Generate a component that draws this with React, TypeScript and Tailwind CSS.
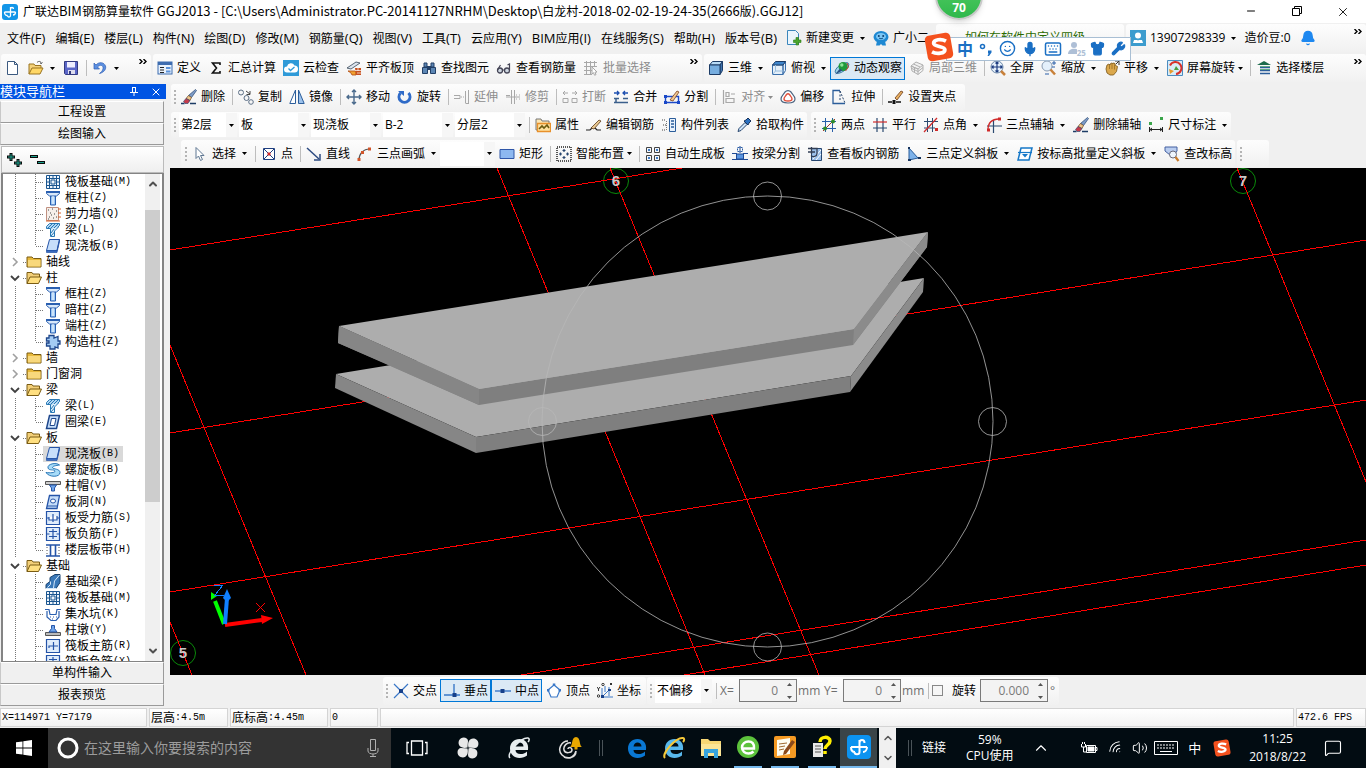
import React from 'react';
import { Bell, Minus, X, Smile, Mic, Keyboard, Shirt, Wrench, ChevronUp, ChevronDown, Wifi, Volume2, MessageSquare } from 'lucide-react';

const B = '#2a5fa8';
const N = '#26456e';
const G = '#a8a8a8';

// 16x16 toolbar drawings
const icons: Record<string, React.ReactNode> = {
  logo: (
    <>
      <rect width="16" height="16" rx="3" fill="#1396e8" />
      <path d="M2.500 8h11M8.500 3v8.500c0 2-3 2-3 0M8.500 5c0-2 3-2 3 0M2.500 8c0 2 1 3.500 3 3.500M13.500 8c0 2-1 3-2.500 3" fill="none" stroke="#fff" strokeWidth="1.300" />
    </>
  ),
  newDoc: <path d="M2.500 1.500h7l3 3v10h-10zM9.500 1.500v3h3" fill="#fff" stroke="#3c5a80" />,
  open: (
    <>
      <path d="M1 14V4h5l1 1.500h6V8" fill="#f5d27a" stroke="#9a7420" />
      <path d="M1 14l3-6h11l-3 6z" fill="#ffd766" stroke="#9a7420" />
      <path d="M9 2.500c2-2 4-1 4.500 1l1-1M13.500 3.500l-1.500-.5" fill="none" stroke="#555" />
    </>
  ),
  save: (
    <>
      <path d="M1.500 1.500h13v13h-12l-1-1z" fill="#5a66c8" stroke="#333a80" />
      <path d="M4 2h8v5.500H4z" fill="#eef" />
      <path d="M5 10h7v4H5z" fill="#dde" />
      <path d="M6 11h2v3H6z" fill="#333a80" />
    </>
  ),
  undo: <path d="M2 3v6h5.500L5.500 7c3-3 6-1.500 5.500 1.500-.2 2-1.500 3.500-3.500 5C12 12.500 14.500 9 13.500 6 12 2 7 1.500 4 5z" fill="#5b8fe0" stroke="#2c5db5" strokeWidth=".7" />,
  define: (
    <>
      <rect x="1" y="2" width="14" height="12" fill="#e8f1fc" stroke="#3d6cb0" />
      <path d="M1 2h14v3H1z" fill="#3d6cb0" />
      <path d="M3 7.500h4M3 10h4M3 12.500h4" stroke="#222" />
      <path d="M9 7h4.500v2H9zM9 10.500h4.500v2H9z" fill="#5a92da" />
    </>
  ),
  sum: <path d="M12 5V3H4.500l4 5-4 5H12v-2" fill="none" stroke="#111" strokeWidth="1.600" />,
  cloud: (
    <>
      <path d="M0 0h16v16H0z" fill="#2f9ad8" />
      <path d="M4 12.500a3 3 0 0 1 0-6 4 4 0 0 1 7.500-1 3.500 3.500 0 0 1 0 7z" fill="#fff" />
      <path d="M5.500 8.500l2 2 4-3.500" fill="none" stroke="#2f9ad8" strokeWidth="1.300" />
    </>
  ),
  level: (
    <>
      <path d="M1 8l9-6 4 1-9 6z" fill="#dde5ee" stroke="#345" strokeWidth=".8" />
      <path d="M2 11h8v4H6l-1-2z" fill="#f0a030" stroke="#b04a10" strokeWidth=".8" />
      <path d="M9 8h6v7h-5z" fill="#c8501e" />
      <path d="M9 10.500h6M12 8v3M11 13h4" stroke="#fff" strokeWidth=".7" />
    </>
  ),
  find: (
    <>
      <path d="M3 3h3v4H3zM10 3h3v4h-3zM1.500 7.500h5v6h-5zM9.500 7.500h5v6h-5z" fill="#5c86b4" stroke="#223f66" />
      <path d="M6 6h4v4H6z" fill="#223f66" />
    </>
  ),
  lens: (
    <>
      <circle cx="4" cy="10.500" r="2.500" fill="#cfd8e2" stroke="#445" strokeWidth="1.300" />
      <circle cx="11" cy="10.500" r="2.500" fill="#cfd8e2" stroke="#445" strokeWidth="1.300" />
      <path d="M6.500 10h2M1.500 10l3-5M13.500 10V4l-2 1" fill="none" stroke="#445" strokeWidth="1.200" />
    </>
  ),
  batch: (
    <>
      <path d="M1 2.500h13M1 6.500h13M1 10.500h8M1 14.500h8M3.500 1v14M7.500 1v14M11.500 1v6" stroke={G} />
      <path d="M9 7l5 5-2 .2 1 2.500-1.500.5-1-2.500L9 14z" fill="#fff" stroke={G} />
    </>
  ),
  cube: (
    <>
      <path d="M1.500 5l3-3.500h10L12 5z" fill="#b9dcf7" stroke="#1d3c66" />
      <path d="M12 5l2.500-3.500v9L12 14.500z" fill="#3f74b0" stroke="#1d3c66" />
      <path d="M1.500 5H12v9.500H1.500z" fill="#77aee0" stroke="#1d3c66" />
    </>
  ),
  cubeTop: (
    <>
      <path d="M1.500 5H12v9.500H1.500zM12 5l2.500-3.500v9L12 14.500z" fill="#e4eff9" stroke="#3a6eaa" />
      <path d="M1.500 5l3-3.500h10L12 5z" fill="#3f86cc" stroke="#1d3c66" />
      <path d="M4.500 5v6h8M4.500 11l-3 3.500" fill="none" stroke="#9abede" />
    </>
  ),
  orbit: (
    <>
      <ellipse cx="8" cy="8" rx="8" ry="3.500" transform="rotate(-35 8 8)" fill="#9fd3ea" stroke="#2a6f9a" strokeWidth=".8" />
      <circle cx="9" cy="6.500" r="4.500" fill="#1f9a3c" />
      <circle cx="7.800" cy="5" r="1.700" fill="#8ee29a" />
      <path d="M1 14.500l5-6 2.500 2z" fill="#2a4d80" />
      <path d="M13 3l1.500 4-3 4" fill="none" stroke="#b8452a" />
    </>
  ),
  cubeGray: (
    <path d="M2 6l5-4 7 3-5 4zM2 6l1 5 6 3.500V9zM9 14.500l5-4V5M4.500 4l6.500 3M5.500 7.500v5M3 8.500l6 3 5-4" fill="#f1f1f1" stroke="#b0b0b0" />
  ),
  full: (
    <>
      <circle cx="7" cy="7" r="6" fill="#e4f0fb" stroke="#6b87a8" />
      <path d="M11 11l4 4" stroke="#c8813a" strokeWidth="2.500" />
      <path d="M7 2v10M2 7h10M5.500 3.500L7 2l1.500 1.500M5.500 10.500L7 12l1.500-1.500M3.500 5.500L2 7l1.500 1.500M10.500 5.500L12 7l-1.500 1.500" fill="none" stroke="#1d3c80" strokeWidth="1.200" />
    </>
  ),
  zoom: (
    <>
      <circle cx="6" cy="6" r="5" fill="#e4f0fb" stroke="#8a9cb2" />
      <path d="M9.500 9.500l4.500 5" stroke="#c8813a" strokeWidth="2.500" />
      <path d="M11 3h4M13 1v4M11 7h3M4 14h4" stroke="#2a5fa8" />
    </>
  ),
  pan: (
    <>
      <path d="M2 9l1-4 2-1 1 1 1-2 2 .5V3l2 .5.500 2 2 1-1 5-3 3.500H6l-3-2z" fill="#dba84c" stroke="#7a5516" strokeWidth=".8" />
      <path d="M5.500 5v4M8 4v5M10.500 4.500v5" stroke="#8c6420" strokeWidth=".7" />
      <path d="M11 1h4v4M15 1l-3 3" fill="none" stroke="#333" />
    </>
  ),
  screenRot: (
    <>
      <path d="M.5.5h15v15H.5z" fill="#d8ecf8" stroke="#4b8cc0" />
      <path d="M3 5.500a6 6 0 1 1 6 8.500" fill="none" stroke="#d8312a" strokeWidth="2" />
      <path d="M7 10l2-4 3 4z" fill="#4a9c3c" />
      <path d="M2 9l1 5 4-3z" fill="#e89a2a" />
    </>
  ),
  floors: (
    <>
      <path d="M1 5L8 1l7 4z" fill="#1c6a4c" />
      <path d="M4 7.500h10M4 10.500h10M4 13.500h10" stroke="#2b5d9a" strokeWidth="1.700" />
      <path d="M4 6.500h10M4 9.500h10" stroke="#46a070" strokeWidth=".8" />
    </>
  ),
  brush: (
    <>
      <path d="M14.500.5l1 1-5 7-3-2z" fill="#7d9cc8" stroke="#26456e" strokeWidth=".7" />
      <path d="M7.500 6.500l3 2-1.500 3-4-2z" fill="#f0c48a" stroke="#6c4a20" strokeWidth=".7" />
      <path d="M5 9.500l4 2-2 3H4l-1.500-2z" fill="#c43a4a" stroke="#26456e" strokeWidth=".6" />
      <path d="M0 14.500h3.500M9 14.500h6" stroke="#1d3c66" strokeWidth="1.500" />
    </>
  ),
  copy: (
    <g fill="#f6f6f6" stroke="#5c6f86">
      <circle cx="3" cy="3.500" r="2.500" />
      <circle cx="8.500" cy="9" r="2.500" />
      <circle cx="13" cy="13" r="2.300" />
      <path d="M8 2l4 3M12 2v3.500H8.500" fill="none" stroke="#444" />
    </g>
  ),
  mirror: (
    <>
      <path d="M6.500 1v13.500H.8z" fill="#fff" stroke="#2b5d9a" />
      <path d="M9.500 1v13.500h5.700z" fill="#9cc2ec" stroke="#2b5d9a" />
    </>
  ),
  move: <path d="M8 1v14M1 8h14M6 3l2-2 2 2M6 13l2 2 2-2M3 6L1 8l2 2M13 6l2 2-2 2" fill="none" stroke="#4a6a8c" strokeWidth="1.400" />,
  rotate: (
    <>
      <path d="M3.500 4a5.500 5.500 0 1 0 8 0" fill="none" stroke="#2f6bc8" strokeWidth="3" />
      <path d="M1 2h6v5z" fill="#2f6bc8" />
    </>
  ),
  extend: <path d="M0 6.500h6v3H0M7 8h1M9 8h1M11.500 2v12M14.500 1v14M11.500 14.500h3" fill="none" stroke={G} />,
  trim: <path d="M1 8h5M6.500 1v14M9.500 1v14M11 6h1M11 10h1M14 6h1M14 10h1M1 6.500h4M6 8h9" fill="none" stroke={G} />,
  brk: <path d="M1 4h5M3 2L1 4l2 2M10 4h5M13 2l2 2-2 2M1 9.500h5v4H1zM10 9.500h5v4h-5z" fill="none" stroke={G} />,
  merge: (
    <>
      <path d="M1 4h5M4 2l2 2-2 2M15 4h-5M12 2l-2 2 2 2" fill="none" stroke="#1d4fb0" strokeWidth="1.300" />
      <path d="M1 9.500h5M10 9.500h5M1 13.500h14M3 10v3" stroke="#3b5f8c" strokeWidth="1.500" />
    </>
  ),
  split: (
    <>
      <path d="M1.500 7.500h13v6h-13z" fill="none" stroke="#1a48c8" strokeWidth="1.400" />
      <path d="M0 6h3v3H0zM0 12h3v3H0zM13 12h3v3h-3z" fill="#1a48c8" />
      <path d="M6 11l7-9 2 1-6 9z" fill="#f2c890" stroke="#7a4020" strokeWidth=".8" />
    </>
  ),
  align: <path d="M2.500 1v14M5 3.500h3v4H5zM5 9.500h8v4H5zM10 5h4" fill="none" stroke={G} strokeWidth="1.200" />,
  offset: (
    <>
      <path d="M5 3a4 4 0 0 1 6 0c1 2 4 4 4 7s-3 4-7 4-7-1-7-4 3-5 4-7z" fill="#fff" stroke="#4d6580" strokeWidth="1.200" />
      <path d="M6.500 5.500c1-1 2-1 3 0 .5 1.500 2.500 2.500 2.500 4.500S10 12 8 12s-4 0-4-2 2-3 2.500-4.500z" fill="none" stroke="#e0503c" strokeWidth="1.400" />
    </>
  ),
  stretch: (
    <>
      <path d="M9 1.500H2v13h12" fill="none" stroke="#2b5d9a" strokeWidth="1.300" />
      <path d="M9 2v9M9 2l5 12" stroke="#26456e" strokeDasharray="2 1.500" />
    </>
  ),
  grip: (
    <>
      <path d="M0 13h4M8 13h5" stroke="#111" strokeWidth="1.500" />
      <path d="M4.500 11h3v4h-3z" fill="#111" />
      <path d="M7 9l6-7 2 1-6 8z" fill="#e8b060" stroke="#6b3a1a" strokeWidth=".8" />
    </>
  ),
  props: (
    <>
      <path d="M1 2h5l1 2h7v9H1z" fill="#fbe6b5" stroke="#777" />
      <path d="M2.500 6.500h13v8h-13z" fill="#ffe2a0" stroke="#e8902a" strokeWidth="1.300" />
      <path d="M4 12l3-3 2 2 3-3 2 3" fill="none" stroke="#6a5a10" strokeWidth="1.600" />
    </>
  ),
  editBar: (
    <>
      <path d="M0 13h4l2-2M9 11l2 2h4" stroke="#222" strokeWidth="1.200" fill="none" />
      <path d="M5 11l8-8 2 1-7 8z" fill="#e8c890" stroke="#5c3a1a" strokeWidth=".8" />
    </>
  ),
  list: (
    <>
      <path d="M1 3h3M2 8h3M1 13h3" stroke="#444" strokeDasharray="1 1" />
      <path d="M5.500 4v9" stroke="#777" strokeDasharray="1 1" />
      <path d="M8.500 1.500h6v13h-6z" fill="#e9f2fc" stroke="#2b5d9a" />
      <path d="M10 4h3M10 7h3M10 10h3" stroke="#2b5d9a" strokeWidth="1.400" />
    </>
  ),
  pick: (
    <>
      <path d="M2 14.500l1-3 6-6 2 2-6 6z" fill="#cfe5fa" stroke="#26456e" />
      <path d="M8 4l2-1 2-2 3 3-2 2-1 2z" fill="#2a6fc0" stroke="#17335c" />
    </>
  ),
  twoPt: (
    <>
      <path d="M4.500 1v14M11.500 1v14M1 4.500h14M1 11.500h14" stroke={B} />
      <path d="M2 14L14 2" stroke="#a0302a" />
      <circle cx="4" cy="11.500" r="2" fill="#2f8c2a" />
      <circle cx="12" cy="4.500" r="2" fill="#2f8c2a" />
    </>
  ),
  parallel: (
    <>
      <path d="M5 1v14M11 1v14M1 11h14" stroke="#2b4a70" strokeWidth="1.200" />
      <path d="M1 5h14" stroke="#d02a2a" strokeWidth="1.200" />
    </>
  ),
  ptAngle: (
    <>
      <path d="M4.500 1v14M9.500 1v14M1 4.500h14M1 11h11" stroke="#2b4a70" />
      <path d="M1 15L14 1" stroke="#d02a2a" strokeWidth="1.200" />
      <path d="M12 11h3v3h-3z" fill="#d02a2a" />
    </>
  ),
  threeAxis: (
    <>
      <path d="M7.500 3v13M1 9h15" stroke="#2b4a70" strokeWidth="1.200" />
      <path d="M2 13C2 6 6 2 13 2" fill="none" stroke="#d02a2a" strokeWidth="1.300" />
      <path d="M1 11.500h3v3H1zM12 .5h3v3h-3z" fill="#d02a2a" />
    </>
  ),
  dimension: (
    <>
      <path d="M1 5h3v3H1zM12 0h3v3h-3z" fill="#3aa54a" />
      <path d="M1.500 10v5M14.500 10v5M2 12.500h12M4 11l-2 1.500L4 14M12 11l2 1.500-2 1.500" fill="none" stroke="#222" />
    </>
  ),
  cursor: <path d="M4 1.500v11l2.500-2.500 2 4.500 2-1-2-4H12z" fill="#fff" stroke="#5f7792" />,
  point: (
    <>
      <path d="M2.500 2.500h11v11h-11zM3 3l10 10M13 3L3 13" fill="#fff" stroke="#1f3f80" />
      <path d="M6.500 6.500h3v3h-3z" fill="#d02a2a" />
    </>
  ),
  line: (
    <>
      <path d="M1 2l12 11" stroke="#2b4a80" strokeWidth="1.500" />
      <path d="M14 8v6H8" fill="none" stroke="#2b4a80" strokeWidth="1.500" />
    </>
  ),
  arc: (
    <>
      <path d="M2 14c0-6 4-11 11-11" fill="none" stroke="#555" strokeWidth="1.200" />
      <path d="M.5 12h3v3h-3zM4 5h3v3H4zM11 1.500h3v3h-3z" fill="#d2552a" />
    </>
  ),
  rect: <path d="M1 3.500h14v9H1z" fill="#8db8f0" stroke="#2f56a8" />,
  smart: (
    <>
      <path d="M1 1h14v14H1z" fill="none" stroke="#222" strokeWidth="1.500" strokeDasharray="1 1" />
      <path d="M8 3v3M8 10v3M3 8h3M10 8h3M6.500 4.500h3M6.500 11.500h3M4.500 6.500v3M11.500 6.500v3" stroke={N} strokeWidth="1.200" />
    </>
  ),
  auto: (
    <>
      <path d="M1.500 1.500h5v5h-5zM9.500 1.500h5v5h-5zM1.500 9.500h5v5h-5zM9.500 9.500h5v5h-5z" fill="#f4f8fd" stroke="#444" />
      <path d="M3 3h2v2H3zM11 3h2v2h-2zM3 11h2v2H3zM11 11h2v2h-2z" fill="#3f7cc8" />
    </>
  ),
  beamSplit: (
    <>
      <path d="M5.500 1.500h5v4h-5z" fill="none" stroke={B} strokeDasharray="2 1" />
      <path d="M4.500 8h7v5h-7z" fill="#5a95e0" stroke="#1f4a94" />
      <path d="M0 7.500h5M11 7.500h5M0 13.500h16M8 0v7" stroke="#1f4a94" />
    </>
  ),
  slabBar: (
    <>
      <path d="M4.500 2.500h10v12h-10z" fill="#9cc0ea" stroke="#26456e" />
      <path d="M6 13l8-9M9 14l5-6" stroke="#fff" />
      <path d="M1 2.500h9v5c0 3-4 4-6 2M1 6h7M4.500 1v7" fill="none" stroke="#333f55" strokeWidth="1.300" />
    </>
  ),
  threeSlab: (
    <>
      <path d="M3 2v12l9-2z" fill="#7db2ea" stroke="#2b5d9a" />
      <path d="M2 1h2v2H2zM2 13h3v2H2zM12 11h3v2h-3z" fill="#17335c" />
    </>
  ),
  levelSlab: (
    <>
      <path d="M4 2h11l-3 12H1z" fill="#fff" stroke="#1678c8" strokeWidth="1.500" />
      <path d="M1 6.500h14" stroke="#1678c8" strokeWidth="1.200" />
      <path d="M5 8h6l-3 3.500z" fill="#1678c8" />
    </>
  ),
  checkLevel: (
    <>
      <path d="M1 1h12v4l-3 4H6L1 5z" fill="#b9cdf0" stroke="#4460a0" />
      <circle cx="9" cy="8.500" r="3.500" fill="#eef5fd" stroke="#667" />
      <path d="M11.500 11l3 4" stroke="#c87a2a" strokeWidth="2.200" />
    </>
  ),
  addDoc: (
    <>
      <path d="M1.500.5h8l3 3v11h-11z" fill="#eaf5fd" stroke="#3a86bc" />
      <path d="M10 7.500h2.500v2.500H15v2.500h-2.500V15H10v-2.500H7.500V10H10z" fill="#4aa52c" stroke="#2c7a18" strokeWidth=".6" />
    </>
  ),
  mascot: (
    <>
      <ellipse cx="8" cy="7" rx="7.500" ry="6" fill="#1e88d2" />
      <path d="M4 11h8l1 4.500H9.500L8 14l-1.500 1.500H3z" fill="#1e88d2" />
      <ellipse cx="8" cy="6.500" rx="5" ry="3.500" fill="#7cc6f4" />
      <circle cx="5.800" cy="6" r="1" fill="#0a3f70" />
      <circle cx="10.200" cy="6" r="1" fill="#0a3f70" />
      <path d="M6 8c1 1 3 1 4 0" fill="none" stroke="#0a4f88" />
    </>
  ),
  user: (
    <>
      <path d="M0 0h16v16H0z" fill="#3c9cce" />
      <circle cx="8" cy="5.500" r="3" fill="#fff" />
      <path d="M3 13l1-3h8l1 3z" fill="#fff" />
      <path d="M7 9l1 2 1-2z" fill="#3c9cce" />
    </>
  ),
  cross: (
    <>
      <path d="M1 1l14 14M15 1L1 15" stroke="#3a78c8" strokeWidth="1.200" />
      <path d="M6 6h4v4H6z" fill="#17408a" />
    </>
  ),
  perp: (
    <>
      <path d="M10 1v11M0 12h16" stroke="#3a78c8" strokeWidth="1.400" />
      <path d="M8.500 10h4v4h-4z" fill="#17408a" />
    </>
  ),
  mid: (
    <>
      <path d="M0 8h16" stroke="#3a78c8" strokeWidth="1.400" />
      <path d="M5.500 6h4v4h-4z" fill="#17408a" />
    </>
  ),
  vertex: (
    <>
      <path d="M8 2l6 5-3 7H5L2 7z" fill="#fff" stroke="#3a78c8" strokeWidth="1.200" />
      <path d="M6.800.5h2.500V3H6.800zM12.500 6H15v2.500h-2.500zM1 6h2.500v2.500H1z" fill="#3a78c8" />
    </>
  ),
  coord: (
    <>
      <path d="M5 5v9h11M5 14l7-7M8 3v6M12 4v9" fill="none" stroke="#3a78c8" />
      <path d="M0 4l1.500 2L3 4M1.500 6v2M13 0l2 2M15 0l-2 2" fill="none" stroke="#333" />
      <path d="M4 12h3v3H4zM11 6h3v2h-3z" fill="#17408a" />
      <circle cx="1.500" cy="13" r="1.200" fill="none" stroke="#333" />
      <circle cx="6" cy="1.500" r="1.200" fill="none" stroke="#333" />
    </>
  ),
  folder: (
    <>
      <path d="M1 13V3h5l1.500 1.500H15V13z" fill="#e8b93c" stroke="#7a5c14" />
      <path d="M2 6h12.500v6.500H2z" fill="#f8d87c" />
    </>
  ),
  folderOpen: (
    <>
      <path d="M1 13.500V2.500h5l1 1.500h6.500V7" fill="#f3cf78" stroke="#7a5c14" />
      <path d="M1 13.500L4 7h11.500l-3 6.500z" fill="#ffdf80" stroke="#7a5c14" />
    </>
  ),
  raft: <path d="M1.500 1.500h13v13h-13zM4.500 1.500v13M11.500 1.500v13M1.500 4.500h13M1.500 11.500h13M8 1.500V5M8 11v3.500M1.500 8H5M11 8h3.500M6 6h4v4H6z" fill="#eef5fc" stroke="#1b5690" />,
  column: (
    <>
      <path d="M5.500 5h5v10h-5z" fill="#9cc8f4" stroke="#2a5fb0" />
      <path d="M1.500 1.500h13v2l-3 2.500h-7l-3-2.500z" fill="#d8e8fa" stroke="#2a5fb0" />
      <path d="M1 1h14v2H1z" fill="#2a5fb0" />
      <path d="M8 6v8" stroke="#fff" />
    </>
  ),
  wall: (
    <>
      <path d="M1.500 1.500h12v13h-12z" fill="#f6efea" stroke="#c09080" />
      <path d="M3 4h1M7 3h1M5 7h1M9 8h1M4 11h1M8 12h1M11 5h1M11 11h1M6 9h1M3 13h1" stroke="#444" />
      <path d="M13 3h3M13 7h3M13 11h3M1 15h14" stroke="#d8622a" />
    </>
  ),
  beam: (
    <>
      <path d="M1.500 4.500l3-3h10v2l-3 3h-10z" fill="#b0d6f4" stroke="#2878b4" />
      <path d="M5.500 6.500v8h4V9l4-4" fill="#dceefb" stroke="#2878b4" />
      <path d="M3 6l4-4M6 6l4-4M9 6l4-4M6 11l3-4M6 14l3.500-4" stroke="#2878b4" />
    </>
  ),
  slab: (
    <>
      <path d="M4.500 1.500h10l-2.500 11H1.500z" fill="#c6defa" stroke="#2554a8" />
      <path d="M1.500 12.500v2h10.500l2.500-11v-2L12 12.500z" fill="#3a6cc0" stroke="#2554a8" strokeWidth=".7" />
    </>
  ),
  ringBeam: (
    <>
      <path d="M4.500 1.500h10l-3 13h-10z" fill="#c6defa" stroke="#1f478c" strokeWidth="1.500" />
      <path d="M6.500 4.500H11l-1.500 7H5z" fill="#fff" stroke="#1f478c" />
    </>
  ),
  tie: <path d="M4 4V1.500h5V4l4-1.500V7h2v3h-2v4l-3-1v2H5v-3H1.500V9H4V7H1.500V4z" fill="#a4ccf4" stroke="#1f478c" strokeWidth="1.300" />,
  spiral: <path d="M14.500 3C11 0 2 2 3 6c1 3 6 1 7 3 0 2-5 2-9 1.500 3 5 14 5 14 0 0-4-7-3-7.500-5C7.500 4 11 3.500 14.500 3z" fill="#a8dcf8" stroke="#2a78b8" />,
  cap: (
    <>
      <path d="M.5 3.500h15v3H.5z" fill="#ccc" stroke="#555" />
      <path d="M4.500 7h7l-2 3v3h-3v-3z" fill="#6fa4e8" stroke="#2554a8" />
    </>
  ),
  hole: (
    <>
      <path d="M4.500 1.500h10l-2.500 13H1.500z" fill="#c6defa" stroke="#2554a8" strokeWidth="1.300" />
      <ellipse cx="8" cy="7" rx="2.500" ry="2" fill="#fff" stroke="#2554a8" />
      <path d="M2 12h10" stroke="#2554a8" />
    </>
  ),
  bar: <path d="M1.500 1.500h13v13h-13zM8 4v8M4 7v3h8V6M1.500 8H4M12 8h2.500" fill="#e0edfb" stroke="#2554a8" strokeWidth="1.200" />,
  mainBar: <path d="M1.500 1.500h13v13h-13zM8.500 4v8M4 10V8h9" fill="#e0edfb" stroke="#2554a8" strokeWidth="1.200" />,
  negBar: <path d="M1.500 1.500h13v13h-13zM4 5.500h8M4 10.500h8M8 3v10M1.500 8h3M11.500 8h3" fill="#e0edfb" stroke="#2554a8" strokeWidth="1.200" />,
  strip: (
    <>
      <path d="M1 3h14M1 14h14M5.500 3v11M10.500 3v11" stroke="#2554a8" strokeWidth="1.600" />
      <path d="M2 5v8M14 5v8" stroke="#555" strokeDasharray="1 2" />
    </>
  ),
  fbeam: (
    <>
      <path d="M1 14.500v-4l4-3v-4l5-3h5v8l-4 6z" fill="#3a78b8" stroke="#17406e" />
      <path d="M5.500 7.500v3l-3 3M8.500 14l1-7 5-6M1 14.500h10" fill="none" stroke="#d5e8fa" />
    </>
  ),
  pit: <path d="M0 3.500h4l1 5h6l1-5h4M2 5v6l4 3.500h5l3-3.500V5M5 11h1M8 11h1M11 11h1M7 13h1" fill="none" stroke="#2a5fb0" strokeWidth="1.200" />,
  pier: (
    <>
      <path d="M.5 10.500h15v3H.5z" fill="#bbb" stroke="#555" />
      <path d="M6.500 3.500h3v3l2.500 3.500H4l2.500-3.500z" fill="#6fa4e8" stroke="#2554a8" />
    </>
  ),
};

const Icon = ({ name, className = 'h-4 w-4' }: { name: string; className?: string }) => (
  <svg viewBox="0 0 16 16" className={`${className} shrink-0`} aria-hidden="true">{icons[name]}</svg>
);

const Arrow = ({ className = '' }: { className?: string }) => (
  <svg viewBox="0 0 5 3" className={`h-[3px] w-[5px] shrink-0 ${className}`} aria-hidden="true"><path d="M0 0h5L2.500 3z" fill="currentColor" /></svg>
);

interface ItemProps {
  icon?: string;
  label?: string;
  arrow?: 'drop' | 'split';
  disabled?: boolean;
  active?: boolean;
}

const Item: React.FC<ItemProps> = ({ icon, label, arrow, disabled, active }) => (
  <button
    disabled={disabled}
    aria-label={label || icon}
    className={`flex h-[23px] shrink-0 items-center whitespace-nowrap pl-1 pr-[3px] ${disabled ? 'text-[#8c8c8c]' : 'text-black'} ${active ? 'bg-[#dbe9f5] outline-1 -outline-offset-1 outline-[#0078d7]' : ''}`}
  >
    {icon && <Icon name={icon} />}
    {label && <span className={icon ? 'ml-1' : ''}>{label}</span>}
    {arrow && <Arrow className={arrow === 'split' ? 'ml-[6px] mr-px' : 'ml-[3px]'} />}
  </button>
);

const Sep = () => <span className="ml-1 mr-px h-4 w-px shrink-0 bg-[#bdbdbd]" />;

const Grip = () => (
  <span className="mr-px flex shrink-0 flex-col gap-[2px]">
    {[0, 1, 2, 3].map((n) => <i key={n} className="h-[2px] w-[2px] bg-[#b4b4b4]" />)}
  </span>
);

const More = () => (
  <button aria-label="更多" className="ml-auto mr-1 mt-[5px] self-start">
    <svg viewBox="0 0 8 5" className="h-[5px] w-2" fill="none" stroke="#000" aria-hidden="true"><path d="M.5 0L3 2.500.5 5M4.500 0L7 2.500 4.500 5" strokeWidth="1.400" /></svg>
  </button>
);

const Bar = ({ className = '', children }: { className?: string; children?: React.ReactNode }) => (
  <div className={`flex items-center rounded-[3px] bg-linear-to-b from-[#fdfdfd] to-[#f1f1f1] ${className}`}>{children}</div>
);

const Combo = ({ label, value, className = 'w-[70px]' }: { label: string; value: string; className?: string }) => (
  <span className={`relative flex h-6 shrink-0 items-center bg-white ${className}`}>
    <select aria-label={label} className="h-full w-full appearance-none bg-transparent pl-[2px] outline-none">
      <option>{value}</option>
    </select>
    <span className="pointer-events-none absolute right-0 flex h-full w-[11px] items-center justify-center bg-[#f6f6f6]"><Arrow /></span>
  </span>
);

const Tools = ({ items }: { items: (ItemProps | '|')[] }) => (
  <>{items.map((it, i) => (it === '|' ? <Sep key={i} /> : <Item key={i} {...it} />))}</>
);

const menus = [
  ['', '文件', '(F)'],
  ['', '编辑', '(E)'],
  ['', '楼层', '(L)'],
  ['', '构件', '(N)'],
  ['', '绘图', '(D)'],
  ['', '修改', '(M)'],
  ['', '钢筋量', '(Q)'],
  ['', '视图', '(V)'],
  ['', '工具', '(T)'],
  ['', '云应用', '(Y)'],
  ['BIM', '应用', '(I)'],
  ['', '在线服务', '(S)'],
  ['', '帮助', '(H)'],
  ['', '版本号', '(B)'],
];

const fileTools: (ItemProps | '|')[] = [{ icon: 'newDoc' }, { icon: 'open', arrow: 'split' }, { icon: 'save' }, '|', { icon: 'undo', arrow: 'split' }];

const calcTools: (ItemProps | '|')[] = [
  { icon: 'define', label: '定义' },
  { icon: 'sum', label: '汇总计算' },
  { icon: 'cloud', label: '云检查' },
  { icon: 'level', label: '平齐板顶' },
  { icon: 'find', label: '查找图元' },
  { icon: 'lens', label: '查看钢筋量' },
  { icon: 'batch', label: '批量选择', disabled: true },
];

const viewTools: (ItemProps | '|')[] = [
  { icon: 'cube', label: '三维', arrow: 'split' },
  { icon: 'cubeTop', label: '俯视', arrow: 'split' },
  { icon: 'orbit', label: '动态观察', active: true },
  { icon: 'cubeGray', label: '局部三维', disabled: true },
  '|',
  { icon: 'full', label: '全屏' },
  { icon: 'zoom', label: '缩放', arrow: 'split' },
  { icon: 'pan', label: '平移', arrow: 'split' },
  { icon: 'screenRot', label: '屏幕旋转', arrow: 'drop' },
  '|',
  { icon: 'floors', label: '选择楼层' },
];

const editTools: (ItemProps | '|')[] = [
  { icon: 'brush', label: '删除' },
  '|',
  { icon: 'copy', label: '复制' },
  { icon: 'mirror', label: '镜像' },
  '|',
  { icon: 'move', label: '移动' },
  { icon: 'rotate', label: '旋转' },
  '|',
  { icon: 'extend', label: '延伸', disabled: true },
  { icon: 'trim', label: '修剪', disabled: true },
  '|',
  { icon: 'brk', label: '打断', disabled: true },
  { icon: 'merge', label: '合并' },
  { icon: 'split', label: '分割' },
  '|',
  { icon: 'align', label: '对齐', arrow: 'drop', disabled: true },
  { icon: 'offset', label: '偏移' },
  { icon: 'stretch', label: '拉伸' },
  '|',
  { icon: 'grip', label: '设置夹点' },
];

const memberTools: (ItemProps | '|')[] = [
  '|',
  { icon: 'props', label: '属性' },
  { icon: 'editBar', label: '编辑钢筋' },
  { icon: 'list', label: '构件列表' },
  { icon: 'pick', label: '拾取构件' },
];

const axisTools: (ItemProps | '|')[] = [
  { icon: 'twoPt', label: '两点' },
  { icon: 'parallel', label: '平行' },
  { icon: 'ptAngle', label: '点角', arrow: 'split' },
  { icon: 'threeAxis', label: '三点辅轴', arrow: 'split' },
  { icon: 'brush', label: '删除辅轴' },
  { icon: 'dimension', label: '尺寸标注', arrow: 'split' },
];

const drawTools: (ItemProps | '|')[] = [
  { icon: 'cursor', label: '选择', arrow: 'split' },
  '|',
  { icon: 'point', label: '点' },
  '|',
  { icon: 'line', label: '直线' },
  { icon: 'arc', label: '三点画弧', arrow: 'split' },
];

const slabTools: (ItemProps | '|')[] = [
  { icon: 'rect', label: '矩形' },
  '|',
  { icon: 'smart', label: '智能布置', arrow: 'drop' },
  '|',
  { icon: 'auto', label: '自动生成板' },
  { icon: 'beamSplit', label: '按梁分割' },
  { icon: 'slabBar', label: '查看板内钢筋' },
  { icon: 'threeSlab', label: '三点定义斜板', arrow: 'split' },
  { icon: 'levelSlab', label: '按标高批量定义斜板', arrow: 'split' },
  { icon: 'checkLevel', label: '查改标高' },
];

const snapTools: ItemProps[] = [
  { icon: 'cross', label: '交点' },
  { icon: 'perp', label: '垂点', active: true },
  { icon: 'mid', label: '中点', active: true },
  { icon: 'vertex', label: '顶点' },
  { icon: 'coord', label: '坐标' },
];

interface Leaf {
  icon: string;
  text: string;
  hotkey: string;
  selected?: boolean;
}

interface Group {
  text?: string;
  open?: boolean;
  children?: Leaf[];
}

const tree: Group[] = [
  {
    children: [
      { icon: 'raft', text: '筏板基础', hotkey: '(M)' },
      { icon: 'column', text: '框柱', hotkey: '(Z)' },
      { icon: 'wall', text: '剪力墙', hotkey: '(Q)' },
      { icon: 'beam', text: '梁', hotkey: '(L)' },
      { icon: 'slab', text: '现浇板', hotkey: '(B)' },
    ],
  },
  { text: '轴线' },
  {
    text: '柱',
    open: true,
    children: [
      { icon: 'column', text: '框柱', hotkey: '(Z)' },
      { icon: 'column', text: '暗柱', hotkey: '(Z)' },
      { icon: 'column', text: '端柱', hotkey: '(Z)' },
      { icon: 'tie', text: '构造柱', hotkey: '(Z)' },
    ],
  },
  { text: '墙' },
  { text: '门窗洞' },
  {
    text: '梁',
    open: true,
    children: [
      { icon: 'beam', text: '梁', hotkey: '(L)' },
      { icon: 'ringBeam', text: '圈梁', hotkey: '(E)' },
    ],
  },
  {
    text: '板',
    open: true,
    children: [
      { icon: 'slab', text: '现浇板', hotkey: '(B)', selected: true },
      { icon: 'spiral', text: '螺旋板', hotkey: '(B)' },
      { icon: 'cap', text: '柱帽', hotkey: '(V)' },
      { icon: 'hole', text: '板洞', hotkey: '(N)' },
      { icon: 'bar', text: '板受力筋', hotkey: '(S)' },
      { icon: 'negBar', text: '板负筋', hotkey: '(F)' },
      { icon: 'strip', text: '楼层板带', hotkey: '(H)' },
    ],
  },
  {
    text: '基础',
    open: true,
    children: [
      { icon: 'fbeam', text: '基础梁', hotkey: '(F)' },
      { icon: 'raft', text: '筏板基础', hotkey: '(M)' },
      { icon: 'pit', text: '集水坑', hotkey: '(K)' },
      { icon: 'pier', text: '柱墩', hotkey: '(Y)' },
      { icon: 'mainBar', text: '筏板主筋', hotkey: '(R)' },
      { icon: 'negBar', text: '筏板负筋', hotkey: '(X)' },
    ],
  },
];

const Mono = ({ children }: { children: React.ReactNode }) => (
  <span className="font-['Liberation_Mono',monospace] text-[10px]">{children}</span>
);

const LeafRow = ({ leaf, last }: { leaf: Leaf; last: boolean }) => (
  <li className="flex h-4 items-center whitespace-nowrap">
    <svg viewBox="0 0 40 16" className="h-4 w-10 shrink-0" aria-hidden="true">
      <path d={`M12.500 0v16M32.500 0v${last ? 8 : 16}M33 8.500h7`} stroke="#777" strokeDasharray="1 1" fill="none" />
    </svg>
    <span className={`flex h-4 items-center pl-[2px] pr-1 ${leaf.selected ? 'bg-[#d9d9d9]' : ''}`}>
      <Icon name={leaf.icon} />
      <span className="ml-1">{leaf.text}</span>
      <Mono>{leaf.hotkey}</Mono>
    </span>
  </li>
);

const GroupRow = ({ group }: { group: Group }) => (
  <li className="flex h-4 items-center whitespace-nowrap">
    <svg viewBox="0 0 23 16" className="h-4 w-[23px] shrink-0" fill="none" aria-hidden="true">
      {group.open ? <path d="M8 6l4 4 4-4" stroke="#404040" strokeWidth="1.800" /> : <path d="M10 4l4 4-4 4" stroke="#a0a0a0" strokeWidth="1.600" />}
      <path d="M20 8.500h3" stroke="#777" strokeDasharray="1 1" />
    </svg>
    <Icon name={group.open ? 'folderOpen' : 'folder'} />
    <span className="ml-1">{group.text}</span>
  </li>
);

const navButton = 'mr-[2px] h-[22px] shrink-0 border border-[#9a9a9a] border-t-white border-l-[#c8c8c8] bg-[#f0f0f0] text-center leading-4';

const Sidebar = () => (
  <aside className="mr-1 flex w-[166px] shrink-0 flex-col overflow-hidden pb-[2px] pt-px">
    <header className="mb-[2px] flex h-[15px] shrink-0 items-center bg-[#0054e3] text-[13px] leading-[15px] text-white">
      模块导航栏
      <svg viewBox="0 0 8 9" className="ml-auto h-[9px] w-2" aria-hidden="true"><path d="M2.500 0v5M5.500 0v5M2 .5h4M0 5.500h8M4 6v3" stroke="#fff" fill="none" /></svg>
      <X className="ml-3 mr-1 h-3 w-3" strokeWidth={2} />
    </header>
    <button className={navButton}>工程设置</button>
    <button className={navButton}>绘图输入</button>
    <div className="ml-px mr-[2px] mt-px flex h-[27px] shrink-0 items-center border border-[#bbb] bg-linear-to-b from-white to-[#efefef] pl-1">
      <svg viewBox="0 0 42 16" className="h-4 w-[42px]" aria-label="展开 折叠">
        <path d="M5 1v8M1 5h8M12 7v8M8 11h8M24 4.500h8M31 10.500h8" stroke="#0a0a0a" strokeWidth="3" />
        <path d="M5 2v6M2 5h6M12 8v6M9 11h6M25 4.500h6M32 10.500h6" stroke="#1aa08c" strokeWidth="1" />
      </svg>
    </div>
    <div className="ml-px mr-[2px] flex min-h-0 flex-1 border-2 border-y border-[#848484] bg-white">
      <ul className="flex-1 overflow-hidden">
        {tree.map((g, i) => (
          <React.Fragment key={i}>
            {g.text && <GroupRow group={g} />}
            {g.children?.map((leaf, n) => <LeafRow key={n} leaf={leaf} last={n === g.children!.length - 1} />)}
          </React.Fragment>
        ))}
      </ul>
      <div className="flex w-[15px] shrink-0 flex-col items-center bg-[#f0f0f0]">
        <ChevronUp className="my-1 h-3 w-3 shrink-0 text-[#505050]" strokeWidth={4} />
        <span className="mt-4 h-[60%] w-full bg-[#cdcdcd]" />
        <ChevronDown className="mb-1 mt-auto h-3 w-3 shrink-0 text-[#505050]" strokeWidth={4} />
      </div>
      <span className="w-[2px] bg-white" />
    </div>
    <button className={navButton}>单构件输入</button>
    <button className={navButton}>报表预览</button>
  </aside>
);

const axes = [
  [170, 250, 682, 168],
  [170, 433, 1366, 240],
  [170, 592, 1366, 400],
  [521, 675, 1366, 540],
  [684, 675, 1366, 565],
  [497, 168, 705, 675],
  [610, 168, 819, 675],
  [1237, 168, 1366, 482],
  [170, 345, 306, 675],
  [170, 622, 192, 675],
];

const Viewport = () => (
  <div className="min-h-0 flex-1 overflow-hidden bg-black">
    <svg viewBox="170 168 1196 507" preserveAspectRatio="xMidYMid slice" className="h-full w-full">
      <g fill="none" stroke="#0a8a0a">
        <circle cx="616" cy="181" r="12.500" />
        <circle cx="1243" cy="181" r="12.500" />
        <circle cx="183" cy="653" r="12.500" />
      </g>
      <g stroke="#f00" shapeRendering="crispEdges">
        {axes.map(([x1, y1, x2, y2], i) => <line key={i} x1={x1} y1={y1} x2={x2} y2={y2} />)}
      </g>
      <g fill="#c8c8c8" textAnchor="middle" className="font-['Liberation_Sans',sans-serif] text-[15px] font-bold">
        <text x="616" y="186">6</text>
        <text x="1243" y="186">7</text>
        <text x="183" y="658">5</text>
      </g>
      <path d="M336 374l588-96-73 98-375 61z" fill="#adadad" />
      <path d="M336 374l140 63v16l-141-65z" fill="#868686" />
      <path d="M476 437l375-61-1 16-374 61z" fill="#7f7f7f" />
      <path d="M851 376l73-98-1 14-73 100z" fill="#8b8b8b" />
      <path d="M389 365l-51-22 1-17 140 63 375-60 74-97-1 15-74 98-374 60z" fill="#7f7f7f" />
      <path d="M339 326l589-94-74 97-375 60z" fill="#adadad" />
      <path d="M339 326l140 63v16l-141-62z" fill="#868686" />
      <path d="M854 329l74-97-1 15-74 98z" fill="#8b8b8b" />
      <g fill="none" stroke="#b8b8b8" strokeWidth=".8">
        <circle cx="767.500" cy="421.500" r="225.500" />
        <circle cx="767.500" cy="196" r="14" />
        <circle cx="992.500" cy="421.500" r="14" />
        <circle cx="767.500" cy="647" r="14" />
        <circle cx="542.500" cy="421.500" r="14" />
      </g>
      <path d="M225 625l37-5" stroke="#f00" strokeWidth="4" />
      <path d="M261 615l12 3-11 6z" fill="#f00" />
      <path d="M256 603l9 9M265 603l-9 9" stroke="#f00" fill="none" shapeRendering="crispEdges" />
      <path d="M224 624l-9-23" stroke="#0f0" strokeWidth="4" />
      <path d="M211 592v8l6-4z" fill="#0f0" />
      <path d="M225 624l2-26" stroke="#1080ff" strokeWidth="4" />
      <path d="M227 589l4 9-4 4-4-4z" fill="#1080ff" />
      <path d="M214 585h9l-8 10h9" stroke="#1080ff" fill="none" shapeRendering="crispEdges" />
    </svg>
  </div>
);

const Spin = ({ label, value, className }: { label: string; value: string; className: string }) => (
  <span className={`flex h-[23px] items-center border border-[#7a7a7a] bg-[#f3f3f3] pr-1 ${className}`}>
    <input aria-label={label} defaultValue={value} className="w-full min-w-0 bg-transparent pr-[9px] text-right text-[#7a7a7a] outline-none" />
    <span className="flex shrink-0 flex-col gap-[10px] text-[#555]">
      <Arrow className="rotate-180" />
      <Arrow />
    </span>
  </span>
);

const SnapBar = () => (
  <div className="flex h-[33px] shrink-0 items-center pb-[2px] pl-[213px]">
    <Bar className="h-7 pl-[3px] pr-[2px]">
      <Grip />
      <Tools items={snapTools} />
    </Bar>
    <Bar className="ml-px h-7 pl-[3px] pr-1 text-[#6e6e6e]">
      <Grip />
      <span className="ml-[2px] text-black"><Combo label="偏移方式" value="不偏移" className="w-[57px]" /></span>
      <Sep />
      <span className="ml-[2px] mr-[2px] w-[17px]">X=</span>
      <Spin label="X" value="0" className="w-[58px]" />
      <span className="ml-px mr-1 w-[22px]">mm</span>
      <span className="mr-[2px] w-[17px]">Y=</span>
      <Spin label="Y" value="0" className="w-[58px]" />
      <span className="ml-px w-[22px]">mm</span>
      <Sep />
      <label className="ml-[2px] flex items-center gap-[9px] text-black">
        <input type="checkbox" className="h-[11px] w-[11px] appearance-none border border-[#888] bg-[#f6f6f6]" />
        旋转
      </label>
      <span className="ml-1"><Spin label="角度" value="0.000" className="w-[68px]" /></span>
      <span className="ml-[2px]">°</span>
    </Bar>
  </div>
);

const statusCell = 'flex h-[19px] items-center overflow-hidden whitespace-nowrap border border-[#d4d4d4] bg-linear-to-b from-white to-[#f2f2f2] pl-px';

const StatusBar = () => (
  <footer className="flex h-5 shrink-0 items-start gap-[2px] bg-[#f0f0f0]">
    <span className={`${statusCell} w-[147px]`}><Mono>X=114971 Y=7179</Mono></span>
    <span className={`${statusCell} w-[79px]`}>层高<Mono>:4.5m</Mono></span>
    <span className={`${statusCell} w-[98px]`}>底标高<Mono>:4.45m</Mono></span>
    <span className={`${statusCell} w-12`}><Mono>0</Mono></span>
    <span className={`${statusCell} flex-1`} />
    <span className={`${statusCell} w-[70px]`}><Mono>472.6 FPS</Mono></span>
  </footer>
);

const SogouMark = ({ className }: { className: string }) => (
  <svg viewBox="0 0 28 28" className={className} aria-hidden="true">
    <rect x="2" y="2" width="24" height="24" rx="4" fill="#f4511e" transform="rotate(-10 14 14)" />
    <path d="M20.500 8.500C16 6 9 7 9 10.500s10.500 2.500 10.500 6-7.500 4.500-12 2" fill="none" stroke="#fff" strokeWidth="3.500" />
  </svg>
);

const ImeBar = () => (
  <div className="absolute left-[924px] top-8 flex items-center text-[#1a6fc4]">
    <SogouMark className="z-10 h-[30px] w-[30px]" />
    <div className="-ml-2 mt-[3px] flex h-6 w-[185px] items-center justify-between border border-[#a9bfd4] bg-white pl-[10px] pr-1">
      <span className="text-base leading-4 font-bold">中</span>
      <svg viewBox="0 0 14 14" className="h-[14px] w-[14px]" aria-hidden="true"><circle cx="3.500" cy="4.500" r="2" fill="none" stroke="currentColor" strokeWidth="1.500" /><path d="M9 8.500h3.500v2L10 14H8.500l1.200-2.500H9z" fill="currentColor" /></svg>
      <Smile className="h-[17px] w-[17px]" />
      <Mic className="h-4 w-4" fill="currentColor" />
      <Keyboard className="h-[18px] w-[18px]" />
      <span className="relative flex text-[#aebfd6]">
        <svg viewBox="0 0 16 16" className="h-4 w-4" aria-hidden="true"><circle cx="6" cy="4" r="3" fill="currentColor" /><path d="M0 13c0-7 12-7 12 0z" fill="currentColor" /></svg>
        <span className="absolute -right-[2px] bottom-0 bg-white text-[8px] leading-[8px] font-bold">25</span>
      </span>
      <Shirt className="h-[15px] w-[15px]" fill="currentColor" />
      <Wrench className="h-[15px] w-[15px]" fill="currentColor" />
    </div>
  </div>
);

const TaskButton = ({ label, open, active, wide, children }: { label: string; open?: boolean; active?: boolean; wide?: boolean; children: React.ReactNode }) => (
  <button aria-label={label} className={`flex h-full shrink-0 flex-col items-center ${wide ? 'w-[51px]' : 'w-[37px]'} ${active ? 'bg-[#3a4448]' : ''}`}>
    <svg viewBox="0 0 24 24" className="my-auto h-6 w-6" aria-hidden="true">{children}</svg>
    {open && <span className={`h-[2px] bg-[#76b9ed] ${active ? 'w-full' : 'w-7'}`} />}
  </button>
);

const BrowserE = ({ color }: { color: string }) => (
  <path d="M5 14h16c1-7-3-11-8.500-11S3 7 3 12.500 7 22 12.500 22c3 0 5.500-1 7.500-2.500v-4c-2 2-4 2.500-6.500 2.500-3 0-5-1.500-5-4zm3.500-3.500c.5-2.500 2-4 4-4s4 1.500 4 4z" fill={color} />
);

const Taskbar = () => (
  <div className="flex h-10 shrink-0 items-center bg-[#020c12] text-[12px] leading-4 text-white">
    <button aria-label="开始" className="flex h-full w-12 items-center justify-center bg-black">
      <svg viewBox="0 0 16 16" className="h-4 w-4" aria-hidden="true"><path d="M0 2.300l6.500-.9v6.200H0zM7.300 1.300L16 0v7.600H7.300zM0 8.400h6.500v6.200L0 13.700zM7.300 8.400H16V16l-8.700-1.300z" fill="#fff" /></svg>
    </button>
    <div className="flex h-full w-[343px] items-center bg-[#333] pl-[9px] pr-3">
      <svg viewBox="0 0 22 24" className="h-6 w-[22px]" aria-hidden="true"><circle cx="11" cy="12" r="9" fill="none" stroke="#fff" strokeWidth="3" /></svg>
      <input aria-label="搜索" placeholder="在这里输入你要搜索的内容" className="ml-[5px] min-w-0 flex-1 bg-transparent text-[14px] placeholder:text-[#9c9c9c] outline-none" />
      <svg viewBox="0 0 12 18" className="h-[18px] w-3" fill="none" stroke="#b0b0b0" aria-hidden="true"><path d="M3.500.5h5v11h-5zM1 9v3c0 4 10 4 10 0V9M6 15v2.500M3 17.500h6" /></svg>
    </div>
    <TaskButton label="任务视图" wide>
      <path d="M6.500 5h11v14h-11zM4 6.500H2v11h2M20 6.500h2v11h-2" fill="none" stroke="#fff" strokeWidth="1.300" />
    </TaskButton>
    <TaskButton label="应用" wide>
      <path d="M11.500 11.500C6 13 1 10 3 4.500 5 0 12 1 12 5zM12.500 11.500C11 6 14 1 19.500 3 24 5 23 12 19 12zM12.500 12.500C18 11 23 14 21 19.500 19 24 12 23 12 19zM11.500 12.500C13 18 10 23 4.500 21 0 19 1 12 5 12z" fill="#e8e8e8" />
    </TaskButton>
    <TaskButton label="浏览器" wide>
      <BrowserE color="#e8eef0" />
      <path d="M3 22C-1 18 14 1 21 2c2 .5 1 3 0 4" fill="none" stroke="#e8eef0" strokeWidth="1.500" />
    </TaskButton>
    <TaskButton label="提醒" wide>
      <path d="M10 13c0-2 4-2 4 1s-7 4-8 0 3-8 7-7M10 5c-7 0-11 9-6 14s14 3 14-4M6 21c6 3 11-1 12-6" fill="none" stroke="#e0e0e0" strokeWidth="1.500" />
      <path d="M12 11c3-1 1-10 6-10s3 9 6 10zM16.500 11h3v2.500h-3z" fill="#e8a800" />
    </TaskButton>
    <span className="mx-1 h-4 w-1 border-x border-[#4a5358]" />
    <span className="w-[11px]" />
    <TaskButton label="Edge"><BrowserE color="#0a78d4" /></TaskButton>
    <TaskButton label="Internet Explorer">
      <BrowserE color="#58b8ec" />
      <path d="M3 22C-1 18 14 1 21 2c2 .5 1 3 0 4" fill="none" stroke="#f5c83a" strokeWidth="2" />
    </TaskButton>
    <TaskButton label="文件资源管理器">
      <path d="M2 3h7l2 2h11v15H2z" fill="#f7d774" />
      <path d="M2 8h20v12H2z" fill="#fbe596" />
      <path d="M5 22v-9h14v9h-4v-5H9v5z" fill="#38a4de" />
    </TaskButton>
    <TaskButton label="安全浏览器" open>
      <circle cx="12" cy="12" r="11" fill="#5cc23c" />
      <path d="M7 13.500h11c.5-5-2-7-5.500-7S6 9 6 12.500 9 18.500 12.500 18.500c2 0 3.500-.5 5-2" fill="none" stroke="#fff" strokeWidth="2.500" />
    </TaskButton>
    <TaskButton label="记事" open>
      <rect x="1" y="1" width="22" height="22" rx="2" fill="#f59a23" />
      <path d="M4 5l13-2v16l-13 2z" fill="#fffdf0" />
      <path d="M6 9l8-1M6 12l6-1M6 15l5-1" stroke="#a06a30" />
      <path d="M19 5l3 2-9 12-3 1 1-4z" fill="#8c4a1a" />
    </TaskButton>
    <TaskButton label="帮助" open>
      <path d="M3 8h10v14H3z" fill="#e8e8e8" />
      <path d="M5 11h6M5 14h6M5 17h6" stroke="#555" />
      <path d="M10 7c0-6 10-6 10-1 0 4-5 4-5 8M15 16v3" fill="none" stroke="#ffee00" strokeWidth="3.500" />
    </TaskButton>
    <TaskButton label="GGJ2013" open active>
      <rect width="24" height="24" rx="4" fill="#0c93f0" />
      <path d="M4 12h16M12.500 5v12c0 3-5 3-5 0M12.500 8c0-4 5-4 5 0M4 12c0 3 1.500 5 4 5M20 12c0 3-2 5-4 5" fill="none" stroke="#fff" strokeWidth="2" />
    </TaskButton>
    <span className="ml-[2px] flex h-full w-[17px] flex-col items-center justify-between bg-[#f0f0f0] py-1 text-[#555]">
      <ChevronUp className="h-3 w-3" strokeWidth={3} />
      <ChevronDown className="h-3 w-3" strokeWidth={3} />
    </span>
    <span className="ml-3 h-4 w-1 border-x border-[#4a5358]" />
    <span className="ml-[10px]">链接</span>
    <div className="ml-5 text-center">
      <p>59%</p>
      <p>CPU使用</p>
    </div>
    <div className="ml-auto flex h-full items-center">
      <ChevronUp className="mr-[30px] h-[18px] w-[18px]" strokeWidth={1.5} />
      <svg viewBox="0 0 18 14" className="mr-[10px] h-[14px] w-[18px]" fill="none" stroke="#fff" aria-hidden="true"><path d="M6.500 4.500h9v7h-9zM16 6.500h1v3h-1M1.500 3v3h4V3M2.500 1v2M4.500 1v2M3.500 6v5h3" /><path d="M8 6h6v4H8z" fill="#fff" /></svg>
      <Wifi className="mr-2 h-4 w-4 -rotate-45" strokeWidth={1.5} />
      <Volume2 className="mr-[6px] h-4 w-4" strokeWidth={1.5} />
      <svg viewBox="0 0 24 14" className="mr-[10px] h-[14px] w-6" fill="none" stroke="#fff" aria-hidden="true"><path d="M.5.500h23v13H.5z" /><path d="M3 4h18M3 7h18" strokeDasharray="2 1" /><path d="M6 10.500h12" /></svg>
      <span className="mr-3 text-[13px]">中</span>
      <SogouMark className="mr-[18px] h-[18px] w-[18px]" />
      <div className="mr-[18px] text-center">
        <p>11:25</p>
        <p className="mt-[2px]">2018/8/22</p>
      </div>
      <MessageSquare className="mr-6 h-[18px] w-[18px]" strokeWidth={1.5} />
    </div>
  </div>
);

const Latin = ({ children }: { children: React.ReactNode }) => (
  <span className="font-['Noto_Sans_CJK_SC',sans-serif] text-[13px]">{children}</span>
);

export default function App() {
  return (
    <div className="relative flex h-screen flex-col overflow-hidden bg-[#f0f0f0] font-['Open_Sans','Noto_Sans_CJK_SC',sans-serif] text-[12px] leading-4 text-black">
      <header className="flex h-[23px] shrink-0 items-center bg-white pl-[2px]">
        <Icon name="logo" />
        <h1 className="ml-[5px] whitespace-nowrap">
          广联达<Latin>BIM</Latin>钢筋算量软件<Latin> GGJ2013 - [C:\Users\Administrator.PC-20141127NRHM\Desktop\</Latin>白龙村<Latin>-2018-02-02-19-24-35(2666</Latin>版<Latin>).GGJ12]</Latin>
        </h1>
        <div className="ml-auto flex">
          <button aria-label="最小化" className="flex w-[46px] justify-center"><Minus className="h-3 w-3" strokeWidth={2} /></button>
          <button aria-label="还原" className="flex w-[46px] justify-center">
            <svg viewBox="0 0 12 12" className="h-3 w-3" fill="none" stroke="#000" aria-hidden="true"><path d="M1.500 3.500h7v7h-7zM3.500 3V1.500h7v7H9" /></svg>
          </button>
          <button aria-label="关闭" className="flex w-[46px] justify-center"><X className="h-[14px] w-[14px]" strokeWidth={1.5} /></button>
        </div>
      </header>

      <div className="flex h-[30px] shrink-0 items-center">
        <nav className="flex w-[936px] shrink-0 items-center pl-[2px]">
          {menus.map(([pre, name, key]) => (
            <button key={name + key} className="whitespace-nowrap px-[5px]">
              <span className="text-[13px]">{pre}</span>{name}<span className="text-[13px]">{key}</span>
            </button>
          ))}
          <Item icon="addDoc" label="新建变更" arrow="split" />
          <Item icon="mascot" label="广小二" />
        </nav>
        <Bar className="h-7 w-[188px] shrink-0 pl-[29px]">
          <a href="#help" className="whitespace-nowrap text-[#2a6a00]">如何在软件中定义四级</a>
        </Bar>
        <Bar className="ml-[2px] h-7 flex-1">
          <Item icon="user" label="13907298339" arrow="split" />
          <Item label="造价豆:0" />
          <Bell className="ml-[6px] h-4 w-4 shrink-0 text-[#1e88f0]" fill="currentColor" />
          <More />
        </Bar>
      </div>

      <div className="flex h-[30px] shrink-0 items-center">
        <Bar className="ml-px h-7 w-[150px] shrink-0"><Tools items={fileTools} /><More /></Bar>
        <Bar className="ml-[2px] h-7 w-[549px] shrink-0"><Tools items={calcTools} /><More /></Bar>
        <Bar className="ml-[2px] h-7 flex-1"><Tools items={viewTools} /><More /></Bar>
      </div>

      <div className="flex min-h-0 flex-1">
        <Sidebar />
        <main className="flex min-w-0 flex-1 flex-col">
          <div className="flex h-7 shrink-0 items-center">
            <Bar className="ml-px h-[27px] pl-[3px] pr-[6px]"><Grip /><Tools items={editTools} /></Bar>
          </div>
          <div className="flex h-7 shrink-0 items-center">
            <Bar className="ml-px h-[26px] pl-[3px]">
              <Grip />
              <div className="ml-[2px] flex gap-[2px]">
                <Combo label="楼层" value="第2层" className="w-[58px]" />
                <Combo label="构件类型" value="板" />
                <Combo label="构件" value="现浇板" />
                <Combo label="名称" value="B-2" />
                <Combo label="分层" value="分层2" />
              </div>
              <Tools items={memberTools} />
            </Bar>
            <Bar className="ml-1 h-[26px] pl-[3px]"><Grip /><Tools items={axisTools} /></Bar>
          </div>
          <div className="flex h-[29px] shrink-0 items-center">
            <Bar className="ml-[11px] h-[27px] pl-1">
              <Grip />
              <Tools items={drawTools} />
              <Combo label="画弧参数" value="" className="w-[55px]" />
              <Tools items={slabTools} />
            </Bar>
            <Bar className="ml-[2px] h-[27px] w-8 pl-[3px]"><Grip /></Bar>
          </div>
          <Viewport />
          <SnapBar />
        </main>
      </div>

      <StatusBar />
      <Taskbar />

      <ImeBar />
      <div className="absolute -top-[28px] left-[935px] flex h-12 w-12 items-end justify-center rounded-full border-2 border-[#c9c9c9] bg-linear-to-b from-[#58d068] to-[#2fb84c] pb-[2px] text-[12px] font-bold text-white shadow-md">70</div>
    </div>
  );
}
